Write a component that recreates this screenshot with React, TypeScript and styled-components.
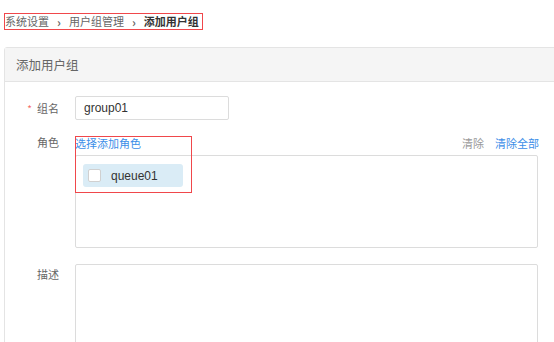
import styled, { createGlobalStyle } from "styled-components";

const GlobalStyle = createGlobalStyle`
  html, body {
    margin: 0;
    padding: 0;
    background: #fff;
    overflow: hidden;
  }
  body {
    font-family: "Noto Sans CJK SC", "Noto Sans", "Liberation Sans", sans-serif;
    color: #333;
  }
`;

const Page = styled.div`
  width: 554px;
  height: 342px;
  overflow: hidden;
  padding: 13px 0 0 4px;
  box-sizing: border-box;
`;

// breadcrumb with the red annotation frame round it
const Crumbs = styled.div`
  display: flex;
  align-items: center;
  width: fit-content;
  height: 17px;
  padding-right: 3px;
  box-sizing: border-box;
  border: 1px solid #f0474b;
  font-size: 11px;
  line-height: 15px;
  color: #666;
  white-space: nowrap;
`;

const Crumb = styled.span<{ $current?: boolean }>`
  font-weight: ${(p) => (p.$current ? 700 : 400)};
  color: ${(p) => (p.$current ? "#333" : "#666")};
`;

const Sep = styled.span`
  margin: 0 8px;
  font-weight: 700;
  color: #666;
  font-size: 12px;
`;

const Panel = styled.div`
  margin-top: 17px;
  width: 580px;
  height: 320px;
  border: 1px solid #e4e4e4;
  border-radius: 3px;
  box-sizing: border-box;
`;

const PanelHeader = styled.div`
  height: 33px;
  display: flex;
  align-items: center;
  padding-left: 11px;
  background: #f5f5f5;
  border-bottom: 1px solid #e4e4e4;
  font-size: 12.5px;
  color: #666;
`;

const Form = styled.div`
  display: flex;
  flex-direction: column;
  padding-top: 14px;
`;

const Row = styled.div<{ $gap?: number }>`
  display: flex;
  align-items: flex-start;
  margin-bottom: ${(p) => p.$gap ?? 0}px;
`;

const Label = styled.div<{ $top?: number }>`
  width: 70px;
  box-sizing: border-box;
  padding-right: 16px;
  padding-top: ${(p) => p.$top ?? 0}px;
  text-align: right;
  font-size: 11px;
  line-height: 14px;
  color: #666;
`;

const Star = styled.span`
  color: #f56c6c;
  margin-right: 5px;
  font-size: 10px;
`;

const Input = styled.div`
  width: 154px;
  height: 24px;
  box-sizing: border-box;
  border: 1px solid #dcdcdc;
  border-radius: 2px;
  padding-left: 8px;
  display: flex;
  align-items: center;
  font-family: "Liberation Sans", "Noto Sans", sans-serif;
  font-size: 12px;
  color: #333;
`;

const Field = styled.div`
  position: relative;
  width: 463px;
  display: flex;
  flex-direction: column;
`;

const FieldBar = styled.div`
  display: flex;
  align-items: center;
  height: 15px;
  margin-bottom: 5px;
  font-size: 11px;
  line-height: 14px;
`;

const Link = styled.span<{ $muted?: boolean }>`
  color: ${(p) => (p.$muted ? "#999" : "#3c8ee8")};
  cursor: pointer;
`;

const Spacer = styled.div`
  flex: 1;
`;

const BarLinks = styled.div`
  display: flex;
  gap: 11px;
  margin-right: -1px;
`;

const RoleBox = styled.div`
  height: 93px;
  box-sizing: border-box;
  border: 1px solid #dcdcdc;
  border-radius: 2px;
  padding: 8px 7px;
  display: flex;
  align-items: flex-start;
`;

const Tag = styled.div`
  width: 100px;
  height: 23px;
  box-sizing: border-box;
  background: #daecf6;
  border-radius: 3px;
  display: flex;
  align-items: center;
  padding-left: 5px;
  gap: 10px;
  font-family: "Liberation Sans", "Noto Sans", sans-serif;
  font-size: 12px;
  color: #333;
`;

const Check = styled.span`
  width: 13px;
  height: 13px;
  box-sizing: border-box;
  background: #fff;
  border: 1px solid #d0d0d0;
  border-radius: 2px;
`;

// red annotation frame drawn over the role picker
const Highlight = styled.div`
  position: absolute;
  left: 0;
  top: 1px;
  width: 117px;
  height: 57px;
  box-sizing: border-box;
  border: 1px solid #f0474b;
  pointer-events: none;
`;

const TextArea = styled.div`
  width: 463px;
  height: 110px;
  box-sizing: border-box;
  border: 1px solid #dcdcdc;
  border-radius: 2px;
`;

export default function App() {
  return (
    <>
      <GlobalStyle />
      <Page>
        <Crumbs>
          <Crumb>系统设置</Crumb>
          <Sep>›</Sep>
          <Crumb>用户组管理</Crumb>
          <Sep>›</Sep>
          <Crumb $current>添加用户组</Crumb>
        </Crumbs>
        <Panel>
          <PanelHeader>添加用户组</PanelHeader>
          <Form>
            <Row $gap={15}>
              <Label $top={5}>
                <Star>*</Star>组名
              </Label>
              <Input>group01</Input>
            </Row>
            <Row $gap={16}>
              <Label>角色</Label>
              <Field>
                <FieldBar>
                  <Link>选择添加角色</Link>
                  <Spacer />
                  <BarLinks>
                    <Link $muted>清除</Link>
                    <Link>清除全部</Link>
                  </BarLinks>
                </FieldBar>
                <RoleBox>
                  <Tag>
                    <Check />
                    queue01
                  </Tag>
                </RoleBox>
                <Highlight />
              </Field>
            </Row>
            <Row>
              <Label $top={3}>描述</Label>
              <TextArea />
            </Row>
          </Form>
        </Panel>
      </Page>
    </>
  );
}
